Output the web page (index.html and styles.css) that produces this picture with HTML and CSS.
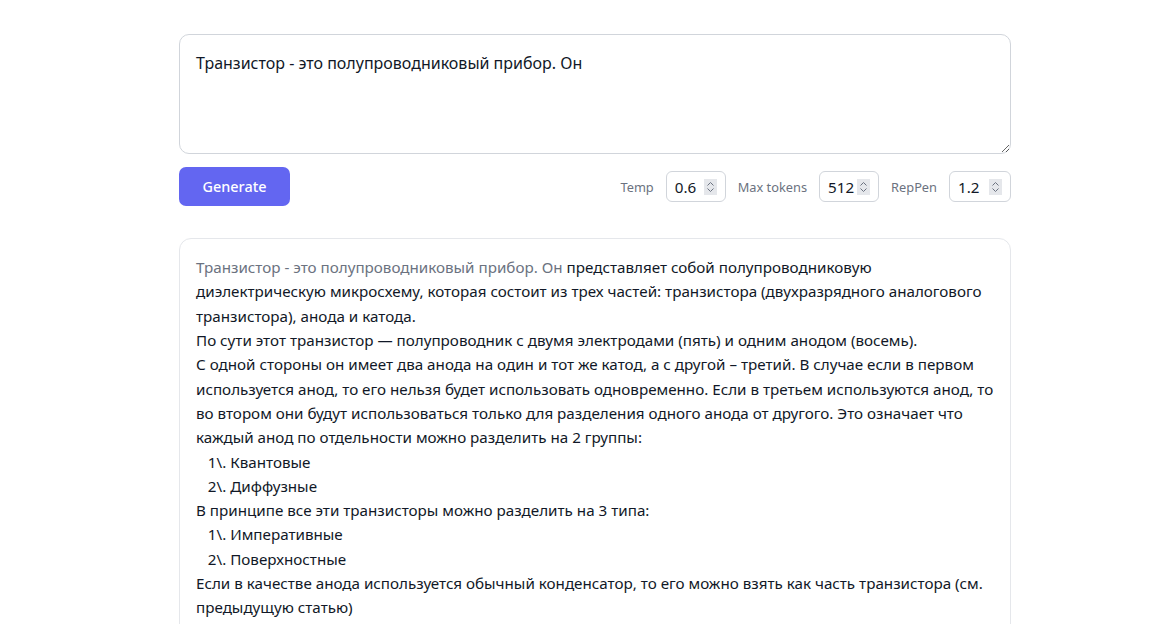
FILE: index.html
```html
<!DOCTYPE html>
<html lang="en">
<head>
    <meta charset="UTF-8">
    <meta name="viewport" content="width=device-width, initial-scale=1.0">
    <title>Text Generation</title>
    <link rel="stylesheet" href="styles.css">
</head>
<body>

    <div class="container">
        <textarea class="prompt">Транзистор - это полупроводниковый прибор. Он</textarea>

        <div class="toolbar">
            <button class="generate">Generate</button>
            <div class="params">
                <label class="param-label">Temp</label>
                <div class="num-input">
                    <span class="num-value">0.6</span>
                    <span class="spinner">
                        <svg width="9" height="12" viewBox="0 0 9 12"><path d="M1.5 4.5 L4.5 1.5 L7.5 4.5 M1.5 7.5 L4.5 10.5 L7.5 7.5" fill="none" stroke="#6b7280" stroke-width="1"/></svg>
                    </span>
                </div>
                <label class="param-label">Max tokens</label>
                <div class="num-input">
                    <span class="num-value">512</span>
                    <span class="spinner">
                        <svg width="9" height="12" viewBox="0 0 9 12"><path d="M1.5 4.5 L4.5 1.5 L7.5 4.5 M1.5 7.5 L4.5 10.5 L7.5 7.5" fill="none" stroke="#6b7280" stroke-width="1"/></svg>
                    </span>
                </div>
                <label class="param-label">RepPen</label>
                <div class="num-input wide">
                    <span class="num-value">1.2</span>
                    <span class="spinner">
                        <svg width="9" height="12" viewBox="0 0 9 12"><path d="M1.5 4.5 L4.5 1.5 L7.5 4.5 M1.5 7.5 L4.5 10.5 L7.5 7.5" fill="none" stroke="#6b7280" stroke-width="1"/></svg>
                    </span>
                </div>
            </div>
        </div>

        <div class="output"><span class="prompt-echo">Транзистор - это полупроводниковый прибор. Он</span> представляет собой полупроводниковую диэлектрическую микросхему, которая состоит из трех частей: транзистора (двухразрядного аналогового транзистора), анода и катода.
По сути этот транзистор — полупроводник с двумя электродами (пять) и одним анодом (восемь).
С одной стороны он имеет два анода на один и тот же катод, а с другой – третий. В случае если в первом используется анод, то его нельзя будет использовать одновременно. Если в третьем используются анод, то во втором они будут использоваться только для разделения одного анода от другого. Это означает что каждый анод по отдельности можно разделить на 2 группы:
   1\. Квантовые
   2\. Диффузные
В принципе все эти транзисторы можно разделить на 3 типа:
   1\. Императивные
   2\. Поверхностные
Если в качестве анода используется обычный конденсатор, то его можно взять как часть транзистора (см. предыдущую статью)</div>
    </div>

</body>
</html>
```

FILE: styles.css
```css
body {
    font-family: "Noto Sans", "Open Sans", sans-serif;
    background-color: #ffffff;
    color: #111827;
    margin: 0;
    padding: 34px 0 0 179px;
    overflow: hidden;
}
.container {
    width: 832px;
}
.prompt {
    display: block;
    box-sizing: border-box;
    width: 100%;
    height: 120px;
    padding: 16px;
    font-family: inherit;
    font-size: 16px;
    line-height: 24px;
    color: #111827;
    border: 1px solid #d1d5db;
    border-radius: 10px;
    resize: vertical;
    outline: none;
}
.toolbar {
    display: flex;
    justify-content: space-between;
    align-items: center;
    margin-top: 13px;
}
.generate {
    width: 111px;
    height: 39px;
    background-color: #6366f1;
    color: #ffffff;
    border: none;
    border-radius: 7px;
    font-family: inherit;
    font-size: 14.4px;
    font-weight: 500;
    cursor: pointer;
}
.params {
    display: flex;
    align-items: center;
    gap: 12px;
}
.param-label {
    font-size: 12.8px;
    color: #6b7280;
}
.num-input {
    display: flex;
    align-items: center;
    box-sizing: border-box;
    width: 60px;
    height: 31px;
    padding: 0 8px;
    border: 1px solid #d1d5db;
    border-radius: 6px;
    font-size: 15.2px;
    color: #111827;
}
.num-input.wide {
    width: 62px;
}
.num-value {
    flex: 1;
}
.spinner {
    display: flex;
    align-items: center;
    justify-content: center;
    width: 13px;
    height: 16px;
    background-color: #e5e7eb;
}
.output {
    margin-top: 32px;
    padding: 16px;
    border: 1px solid #e5e7eb;
    border-radius: 12px;
    font-size: 15.2px;
    line-height: 1.6;
    white-space: pre-wrap;
    color: #111827;
}
.prompt-echo {
    color: #6b7280;
}
```
